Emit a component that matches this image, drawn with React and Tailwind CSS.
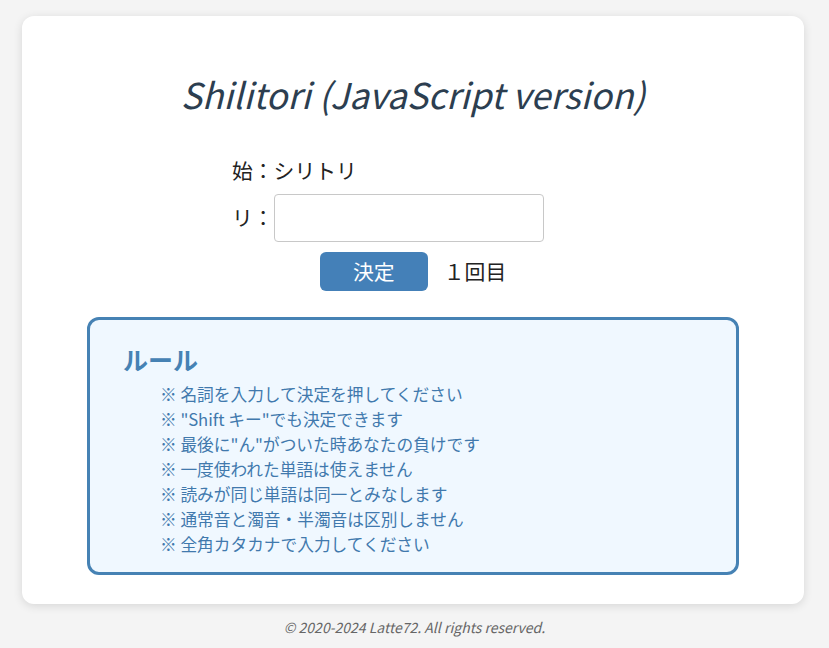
export default function App() {
  const rules = [
    "※ 名詞を入力して決定を押してください",
    "※ \"Shift キー\"でも決定できます",
    "※ 最後に\"ん\"がついた時あなたの負けです",
    "※ 一度使われた単語は使えません",
    "※ 読みが同じ単語は同一とみなします",
    "※ 通常音と濁音・半濁音は区別しません",
    "※ 全角カタカナで入力してください",
  ];
  const font = { fontFamily: '"Noto Sans CJK JP", "Noto Sans", sans-serif' };
  return (
    <div className="min-h-[648px] bg-[#f4f4f4] pt-4" style={font}>
      <div className="mx-[22px] w-[782px] h-[588px] rounded-xl bg-white shadow-[0_2px_10px_rgba(0,0,0,0.12)] pt-[52px]">
        <h1 className="text-center text-[35.5px] leading-[52px] italic text-[#2c3e50]">
          Shilitori (JavaScript version)
        </h1>
        <div className="mt-[35px] pl-[210px] text-[20.8px] text-[#222]">
          <div className="h-[30px] leading-[30px]">始：シリトリ</div>
          <div className="mt-[9px] flex items-center h-[48px]">
            <span>リ：</span>
            <input className="w-[270px] h-[48px] rounded border border-[#c8c8c8] bg-white px-2 outline-none" />
          </div>
        </div>
        <div className="mt-[10px] flex justify-center items-center gap-[16px]">
          <button className="w-[108px] h-[39px] rounded-md bg-[#4480b8] text-white text-[20.8px] leading-[39px]">決定</button>
          <span className="text-[20.8px] text-[#222] whitespace-nowrap">１回目</span>
        </div>
        <div className="mx-auto mt-[26px] w-[652px] h-[258px] rounded-xl border-[3px] border-[#4682b4] bg-[#f0f8ff] pl-[33px] pt-[22px]">
          <h2 className="text-[25px] leading-[34px] font-bold text-[#4682b4]">ルール</h2>
          <ul className="mt-[6px] pl-[37px] text-[16.7px] leading-[25px] text-[#4179ad]">
            {rules.map((r) => (
              <li key={r}>{r}</li>
            ))}
          </ul>
        </div>
      </div>
      <div className="text-center text-[14px] italic text-[#666] mt-[13px]">
        © 2020-2024 Latte72. All rights reserved.
      </div>
    </div>
  );
}
